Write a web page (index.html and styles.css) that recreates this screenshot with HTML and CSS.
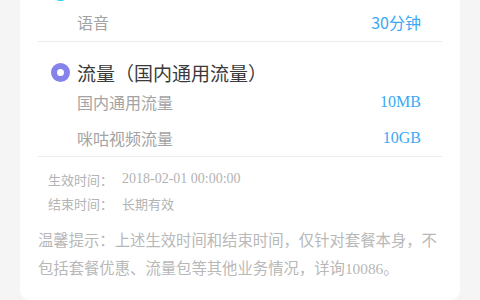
FILE: index.html
```html
<!DOCTYPE html>
<html lang="zh-CN">
<head>
<meta charset="utf-8">
<title>套餐详情</title>
<link rel="stylesheet" href="styles.css">
</head>
<body>
<div class="card">
  <div class="section">
    <div class="title"><span class="dot dot-cyan"></span></div>
    <div class="row"><span class="label">语音</span><span class="value">30分钟</span></div>
  </div>
  <div class="section">
    <div class="title"><span class="dot dot-purple"></span><span>流量（国内通用流量）</span></div>
    <div class="row"><span class="label">国内通用流量</span><span class="value serif">10MB</span></div>
    <div class="row"><span class="label">咪咕视频流量</span><span class="value serif">10GB</span></div>
  </div>
  <div class="dates">
    <div class="date-line"><span class="date-label">生效时间：</span><span class="date-value serif">2018-02-01 00:00:00</span></div>
    <div class="date-line"><span class="date-label">结束时间：</span><span class="date-value">长期有效</span></div>
  </div>
  <p class="tip">温馨提示：上述生效时间和结束时间，仅针对套餐本身，不包括套餐优惠、流量包等其他业务情况，详询<span class="serif">10086</span>。</p>
</div>
</body>
</html>
```

FILE: styles.css
```css
html, body {
  margin: 0;
  padding: 0;
  background: #f5f5f5;
  font-family: "Noto Sans CJK SC", "Noto Sans", sans-serif;
  overflow: hidden;
}
.card {
  margin: -39px 20px 0;
  padding: 0 18px 17px;
  background: #fff;
  border-radius: 0 0 10px 10px;
}
.section {
  padding-top: 18px;
  border-bottom: 1px solid #ececec;
}
.section:first-child .row {
  height: 38px;
}
.title {
  display: flex;
  align-items: center;
  height: 24px;
  padding-left: 13px;
  font-size: 19px;
  color: #3a3a3a;
}
.dot {
  width: 19px;
  height: 19px;
  border-radius: 50%;
  margin-right: 7px;
  box-sizing: border-box;
  border: 6.5px solid;
  background: #fff;
  flex: none;
}
.dot-cyan { border-color: #1ecff2; }
.dot-purple { border-color: #8583ea; }
.row {
  display: flex;
  justify-content: space-between;
  align-items: center;
  height: 36px;
  padding: 0 21px 0 39px;
  font-size: 16px;
}
.label { color: #a3a3a3; }
.value { color: #3aa9f4; }
.serif {
  font-family: "Liberation Serif", "Noto Sans CJK SC", serif;
}
.dates {
  padding: 10px 0 0 10px;
  font-size: 13px;
  color: #b3b3b3;
}
.date-line {
  display: flex;
  align-items: center;
  height: 24px;
}
.date-value { margin-left: 9px; }
.date-value.serif { font-size: 14px; }
.tip {
  margin: 10px 0 0;
  font-size: 15.35px;
  line-height: 28px;
  color: #b8b8b8;
}
```
